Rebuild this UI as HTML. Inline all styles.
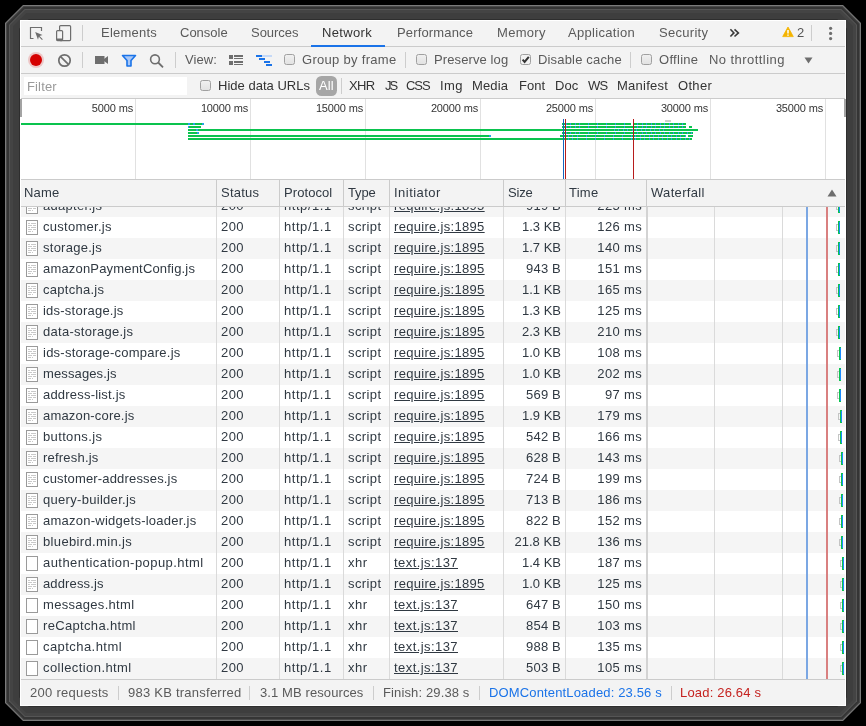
<!DOCTYPE html><html><head><meta charset="utf-8">
<style>
*{box-sizing:border-box}
html,body{margin:0;padding:0;width:866px;height:726px;overflow:hidden;background:#000}
body{font-family:"Liberation Sans",sans-serif;font-size:13px;color:#303942;position:relative}
.fr{position:absolute;left:0;top:0;width:866px;height:726px}
#dt{will-change:transform;position:absolute;left:20px;top:20px;width:826px;height:686px;background:#fff;overflow:hidden}
.bar{position:absolute;left:0;width:826px;background:#f3f3f3;border-bottom:1px solid #cbcbcb}
.t{position:absolute;white-space:nowrap}
.tab{color:#5a5a5a;line-height:26px;top:0}
.sep{position:absolute;width:1px;background:#cdcdcd}
.cb{position:absolute;width:11px;height:11px;border:1px solid #a0a0a0;border-radius:2.5px;background:linear-gradient(#f0f0f0,#e2e2e2)}
.tb2{line-height:26px;color:#5a5a5a}
.tb3{line-height:24px;color:#333}
#ov{position:absolute;left:0;top:79px;width:826px;height:81px;background:#fff;border-bottom:1px solid #cbcbcb}
.gl{position:absolute;top:0;width:1px;height:80px;background:#e1e1e1}
.gt{position:absolute;font-size:11px;letter-spacing:-0.15px;line-height:13px;top:3px;color:#333;white-space:nowrap;text-align:right;width:70px}
.ol{position:absolute;height:2px;background:#0ac34e}
#hdr{position:absolute;left:0;top:160px;width:826px;height:27px;background:#f3f3f3;border-bottom:1px solid #cbcbcb}
.hd{position:absolute;top:0;line-height:26px;color:#303942;white-space:nowrap}
.hv{position:absolute;top:0;width:1px;height:26px;background:#cbcbcb}
#grid{position:absolute;left:0;top:187px;width:826px;height:472px;overflow:hidden;background:#fff}
.r{position:absolute;left:0;width:826px;height:21px;background:#fff}
.r.odd{background:#f5f5f5}
.c{position:absolute;top:0;line-height:19px;white-space:nowrap;color:#303942}
.ic{position:absolute;left:6px;top:3px}
.nm{left:23px;letter-spacing:0.15px}
.st{left:201px;letter-spacing:0.2px}
.pr{left:264px;letter-spacing:0.45px}
.ty{left:328px;letter-spacing:0.25px}
.in{left:374px;letter-spacing:0.3px}
.in u{text-decoration:underline;text-underline-offset:1px}
.sz{right:285px;text-align:right}
.tm{right:204px;text-align:right;letter-spacing:0.1px}
.gv{position:absolute;top:0;width:1px;height:472px;background:#dadada}
.wf{position:absolute;left:816px;top:0;width:10px;height:21px}
.wq{position:absolute;left:0;top:7px;width:3px;height:7px;border:1px solid #c4c4c4;border-right:none}
.wg{position:absolute;left:2px;top:4px;width:2px;height:13px;background:#0ac34e}
.wb{position:absolute;left:3px;top:5px;width:1px;height:11px;background:#1a8cff}
#status{position:absolute;left:0;top:659px;width:826px;height:27px;background:#f3f3f3;border-top:1px solid #cbcbcb}
.sb{position:absolute;top:0;line-height:26px;color:#5a5a5a;white-space:nowrap}
</style></head><body>
<div class="fr" style="background:#7a7a7a;clip-path:polygon(5.00px 23.00px,23.00px 5.00px,843.00px 5.00px,861.00px 23.00px,861.00px 703.00px,843.00px 721.00px,23.00px 721.00px,5.00px 703.00px)"></div>
<div class="fr" style="background:#4a4a4a;clip-path:polygon(6.00px 23.41px,23.41px 6.00px,842.59px 6.00px,860.00px 23.41px,860.00px 702.59px,842.59px 720.00px,23.41px 720.00px,6.00px 702.59px)"></div>
<div class="fr" style="background:#353535;clip-path:polygon(7.00px 23.83px,23.83px 7.00px,842.17px 7.00px,859.00px 23.83px,859.00px 702.17px,842.17px 719.00px,23.83px 719.00px,7.00px 702.17px)"></div>
<div class="fr" style="background:#555555;clip-path:polygon(9.00px 24.66px,24.66px 9.00px,841.34px 9.00px,857.00px 24.66px,857.00px 701.34px,841.34px 717.00px,24.66px 717.00px,9.00px 701.34px)"></div>
<div class="fr" style="background:#444444;clip-path:polygon(10.00px 25.07px,25.07px 10.00px,840.93px 10.00px,856.00px 25.07px,856.00px 700.93px,840.93px 716.00px,25.07px 716.00px,10.00px 700.93px)"></div>
<div class="fr" style="background:#3e3e3e;clip-path:polygon(13.00px 26.31px,26.31px 13.00px,839.69px 13.00px,853.00px 26.31px,853.00px 699.69px,839.69px 713.00px,26.31px 713.00px,13.00px 699.69px)"></div>
<div class="fr" style="background:#2e2e2e;clip-path:polygon(19.00px 28.80px,28.80px 19.00px,837.20px 19.00px,847.00px 28.80px,847.00px 697.20px,837.20px 707.00px,28.80px 707.00px,19.00px 697.20px)"></div>
<div id="dt">
 <!-- tab bar -->
 <div class="bar" style="top:0;height:27px">
  <svg style="position:absolute;left:8px;top:5px" width="16" height="16" viewBox="0 0 16 16">
   <path d="M5.5 13.5H2.5V2.5H13.5V6" fill="none" stroke="#6e6e6e" stroke-width="1.2"></path>
   <path d="M7.2 7L14.5 10 11.5 11 14.8 14.3 14 15 10.8 11.8 10 14.8Z" fill="#6e6e6e"></path>
  </svg>
  <svg style="position:absolute;left:35px;top:4px" width="18" height="18" viewBox="0 0 18 18">
   <rect x="4.6" y="1.6" width="11" height="15" rx="1" fill="none" stroke="#6e6e6e" stroke-width="1.2"></rect>
   <rect x="1.6" y="6.6" width="6" height="10" rx="1" fill="#f3f3f3" stroke="#6e6e6e" stroke-width="1.2"></rect>
   <rect x="1.6" y="14.5" width="6" height="2" fill="#6e6e6e"></rect>
  </svg>
  <div class="sep" style="left:62px;top:5px;height:16px"></div>
  <span class="t tab" style="left: 81px; letter-spacing: 0.22px;">Elements</span>
  <span class="t tab" style="left: 160px; letter-spacing: -0.01px;">Console</span>
  <span class="t tab" style="left: 231px; letter-spacing: -0.03px;">Sources</span>
  <span class="t tab" style="left: 302px; color: rgb(51, 51, 51); letter-spacing: 0.35px;">Network</span>
  <div style="position:absolute;left:291px;top:25px;width:74px;height:2px;background:#1a73e8"></div>
  <span class="t tab" style="left: 377px; letter-spacing: 0.15px;">Performance</span>
  <span class="t tab" style="left: 477px; letter-spacing: 0.31px;">Memory</span>
  <span class="t tab" style="left: 548px; letter-spacing: 0.31px;">Application</span>
  <span class="t tab" style="left: 639px; letter-spacing: 0.29px;">Security</span>
  <svg style="position:absolute;left:709px;top:8px" width="12" height="11" viewBox="0 0 12 11"><path d="M1.4 1.3L4.9 4.9L1.4 8.5M5.5 1.3L9.4 4.9L5.5 8.5" fill="none" stroke="#3a3a3a" stroke-width="1.6"></path></svg>
  <svg style="position:absolute;left:762px;top:6px" width="12" height="12" viewBox="0 0 12 12"><path d="M6 1L11.3 10.6H0.7Z" fill="#f4b400" stroke="#f4b400" stroke-width="0.8" stroke-linejoin="round"></path><path d="M6 4V7.4M6 8.4V9.8" stroke="#fff" stroke-width="1.5"></path></svg>
  <span class="t tab" style="left: 777px; color: rgb(85, 85, 85); letter-spacing: 0.41px;">2</span>
  <div class="sep" style="left:791px;top:5px;height:16px"></div>
  <svg style="position:absolute;left:807px;top:6px" width="7" height="16" viewBox="0 0 7 16"><circle cx="3.6" cy="2.3" r="1.6" fill="#6e6e6e"></circle><circle cx="3.6" cy="7.4" r="1.6" fill="#6e6e6e"></circle><circle cx="3.6" cy="12.6" r="1.6" fill="#6e6e6e"></circle></svg>
 </div>
 <!-- toolbar 2 -->
 <div class="bar" style="top:27px;height:27px">
  <svg style="position:absolute;left:6px;top:3px" width="20" height="20" viewBox="0 0 20 20"><circle cx="10" cy="10" r="8" fill="#d50000" opacity="0.18"></circle><circle cx="10" cy="10" r="6" fill="#d50000"></circle></svg>
  <svg style="position:absolute;left:37px;top:6px" width="15" height="15" viewBox="0 0 15 15"><circle cx="7.5" cy="7.5" r="5.7" fill="none" stroke="#6e6e6e" stroke-width="1.7"></circle><path d="M3.6 3.6L11.4 11.4" stroke="#6e6e6e" stroke-width="1.7"></path></svg>
  <div class="sep" style="left:62px;top:5px;height:16px"></div>
  <svg style="position:absolute;left:74px;top:8px" width="15" height="10" viewBox="0 0 15 10"><rect x="1" y="1" width="9.5" height="8" fill="#6e6e6e"></rect><path d="M10 4L14 1V9L10 6Z" fill="#6e6e6e"></path></svg>
  <svg style="position:absolute;left:101px;top:7px" width="16" height="13" viewBox="0 0 16 13"><path d="M1.5 1.5H14.5L10 6.5V12H6V6.5Z" fill="#a8c7f7" stroke="#1a73e8" stroke-width="1.6" stroke-linejoin="round"></path></svg>
  <svg style="position:absolute;left:129px;top:7px" width="16" height="15" viewBox="0 0 16 15"><circle cx="6" cy="5.3" r="4.4" fill="none" stroke="#6e6e6e" stroke-width="1.6"></circle><path d="M9.2 8.5L14 13.3" stroke="#6e6e6e" stroke-width="1.8"></path></svg>
  <div class="sep" style="left:155px;top:5px;height:16px"></div>
  <span class="t tb2" style="left: 165px; letter-spacing: 0.06px;">View:</span>
  <svg style="position:absolute;left:208px;top:7px" width="16" height="12" viewBox="0 0 16 12"><rect x="1" y="1" width="4" height="4" fill="#6e6e6e"></rect><rect x="1" y="7" width="4" height="4" fill="#6e6e6e"></rect><rect x="6" y="1" width="9" height="2" fill="#6e6e6e"></rect><rect x="6" y="4" width="9" height="1" fill="#6e6e6e"></rect><rect x="6" y="7" width="9" height="2" fill="#6e6e6e"></rect><rect x="6" y="10" width="9" height="1" fill="#6e6e6e"></rect></svg>
  <svg style="position:absolute;left:235px;top:7px" width="18" height="13" viewBox="0 0 18 13"><rect x="1" y="1" width="6" height="2" fill="#1a73e8"></rect><rect x="7" y="1" width="10" height="2" fill="#c5d9f7"></rect><rect x="4" y="4" width="6" height="2" fill="#1a73e8"></rect><rect x="9" y="7" width="6" height="2" fill="#1a73e8"></rect><rect x="11" y="10" width="6" height="2" fill="#1a73e8"></rect></svg>
  <div class="cb" style="left:264px;top:7px"></div>
  <span class="t tb2" style="left: 282px; letter-spacing: 0.3px;">Group by frame</span>
  <div class="sep" style="left:385px;top:5px;height:16px"></div>
  <div class="cb" style="left:396px;top:7px"></div>
  <span class="t tb2" style="left: 414px; letter-spacing: 0.11px;">Preserve log</span>
  <div class="cb" style="left:500px;top:7px;background:#f2f2f2"><svg style="position:absolute;left:0;top:0" width="9" height="9" viewBox="0 0 9 9"><path d="M1.6 4.6L3.6 6.9L7.8 1.8" fill="none" stroke="#333" stroke-width="2"></path></svg></div>
  <span class="t tb2" style="left: 518px; letter-spacing: 0.17px;">Disable cache</span>
  <div class="sep" style="left:610px;top:5px;height:16px"></div>
  <div class="cb" style="left:621px;top:7px"></div>
  <span class="t tb2" style="left: 639px; letter-spacing: 0.29px;">Offline</span>
  <span class="t tb2" style="left: 689px; letter-spacing: 0.44px;">No throttling</span>
  <svg style="position:absolute;left:784px;top:10px" width="9" height="7" viewBox="0 0 9 7"><path d="M0.5 0.5H8.5L4.5 6.5Z" fill="#6e6e6e"></path></svg>
 </div>
 <!-- filter bar -->
 <div class="bar" style="top:54px;height:25px">
  <div style="position:absolute;left:4px;top:3px;width:163px;height:18px;background:#fff"></div>
  <span class="t tb3" style="left: 7px; top: 1px; color: rgb(154, 154, 154); letter-spacing: 0.14px;">Filter</span>
  <div class="cb" style="left:180px;top:6px"></div>
  <span class="t tb3" style="left: 198px; letter-spacing: 0.02px;">Hide data URLs</span>
  <div style="position:absolute;left:296px;top:2px;width:21px;height:20px;border-radius:5.5px;background:#a6a6a6"></div>
  <span class="t tb3" style="left: 299px; color: rgb(255, 255, 255); letter-spacing: 0.15px;">All</span>
  <div class="sep" style="left:321px;top:4px;height:16px"></div>
  <span class="t tb3" style="left: 329px; letter-spacing: -0.62px;">XHR</span>
  <span class="t tb3" style="left: 365px; letter-spacing: -2.01px;">JS</span>
  <span class="t tb3" style="left: 386px; letter-spacing: -1.04px;">CSS</span>
  <span class="t tb3" style="left: 420px; letter-spacing: 0.4px;">Img</span>
  <span class="t tb3" style="left: 452px; letter-spacing: 0.13px;">Media</span>
  <span class="t tb3" style="left: 499px; letter-spacing: 0.03px;">Font</span>
  <span class="t tb3" style="left: 535px; letter-spacing: 0.02px;">Doc</span>
  <span class="t tb3" style="left: 568px; letter-spacing: -0.73px;">WS</span>
  <span class="t tb3" style="left: 597px; letter-spacing: 0.26px;">Manifest</span>
  <span class="t tb3" style="left: 658px; letter-spacing: 0.31px;">Other</span>
 </div>
 <!-- overview -->
 <div id="ov">
  <div class="gl" style="left:115px"></div>
  <div class="gl" style="left:230px"></div>
  <div class="gl" style="left:345px"></div>
  <div class="gl" style="left:460px"></div>
  <div class="gl" style="left:575px"></div>
  <div class="gl" style="left:690px"></div>
  <div class="gl" style="left:805px"></div>
  <span class="gt" style="left:43px">5000 ms</span>
  <span class="gt" style="left:158px">10000 ms</span>
  <span class="gt" style="left:273px">15000 ms</span>
  <span class="gt" style="left:388px">20000 ms</span>
  <span class="gt" style="left:503px">25000 ms</span>
  <span class="gt" style="left:618px">30000 ms</span>
  <span class="gt" style="left:733px">35000 ms</span>
  <div style="position:absolute;left:825px;top:0;width:1px;height:80px;background:#cbcbcb"></div>
  <div class="ol" style="left:0px;top:24px;width:183px"></div>
<div class="ol" style="left:168px;top:27px;width:13px"></div>
<div class="ol" style="left:168px;top:30px;width:510px"></div>
<div class="ol" style="left:168px;top:33px;width:10px"></div>
<div class="ol" style="left:168px;top:36px;width:302px"></div>
<div class="ol" style="left:168px;top:39px;width:504px"></div>
<div class="ol" style="left:542px;top:24px;width:69px;background:repeating-linear-gradient(90deg,#0ac34e 0 3.5px,#2aa6e0 3.5px 4.5px)"></div>
<div class="ol" style="left:614px;top:24px;width:52px;background:repeating-linear-gradient(90deg,#0ac34e 0 3.5px,#2aa6e0 3.5px 4.5px)"></div>
<div class="ol" style="left:542px;top:27px;width:124px;background:repeating-linear-gradient(90deg,#0ac34e 0 3.5px,#2aa6e0 3.5px 4.5px)"></div>
<div class="ol" style="left:669px;top:27px;width:3px"></div>
<div class="ol" style="left:590px;top:30px;width:57px;background:repeating-linear-gradient(90deg,#0ac34e 0 3.5px,#2aa6e0 3.5px 4.5px)"></div>
<div class="ol" style="left:542px;top:33px;width:131px;background:repeating-linear-gradient(90deg,#0ac34e 0 3.5px,#2aa6e0 3.5px 4.5px)"></div>
<div class="ol" style="left:540px;top:36px;width:126px;background:repeating-linear-gradient(90deg,#0ac34e 0 3.5px,#2aa6e0 3.5px 4.5px)"></div>
<div class="ol" style="left:668px;top:36px;width:5px"></div>
<div class="ol" style="left:540px;top:39px;width:130px;background:repeating-linear-gradient(90deg,#0ac34e 0 3.5px,#2aa6e0 3.5px 4.5px)"></div>
<div style="position:absolute;left:543px;top:20px;width:1px;height:60px;background:#1565c0"></div>
<div style="position:absolute;left:545px;top:20px;width:1px;height:60px;background:#b71c1c"></div>
<div style="position:absolute;left:613px;top:20px;width:1px;height:60px;background:#b71c1c"></div>
<div style="position:absolute;left:645px;top:21px;width:6px;height:2px;background:#cfcfcf"></div>
 <div style="position:absolute;left:168px;top:24px;width:2px;height:2px;background:#27a3e6"></div>
<div style="position:absolute;left:173px;top:24px;width:2px;height:2px;background:#27a3e6"></div>
<div style="position:absolute;left:182px;top:24px;width:2px;height:2px;background:#27a3e6"></div>
<div style="position:absolute;left:168px;top:27px;width:1px;height:2px;background:#27a3e6"></div>
<div style="position:absolute;left:176px;top:30px;width:2px;height:2px;background:#27a3e6"></div>
<div style="position:absolute;left:177px;top:33px;width:2px;height:2px;background:#27a3e6"></div>
<div style="position:absolute;left:469px;top:36px;width:2px;height:2px;background:#27a3e6"></div>
</div>
 <!-- header -->
 <div id="hdr">
  <span class="hd" style="left: 4px; letter-spacing: 0.18px;">Name</span>
  <div class="hv" style="left:196px"></div>
  <span class="hd" style="left: 201px; letter-spacing: 0.23px;">Status</span>
  <div class="hv" style="left:259px"></div>
  <span class="hd" style="left: 264px; letter-spacing: 0.08px;">Protocol</span>
  <div class="hv" style="left:323px"></div>
  <span class="hd" style="left: 328px; letter-spacing: -0.16px;">Type</span>
  <div class="hv" style="left:369px"></div>
  <span class="hd" style="left: 374px; letter-spacing: 0.47px;">Initiator</span>
  <div class="hv" style="left:483px"></div>
  <span class="hd" style="left: 488px; letter-spacing: -0.16px;">Size</span>
  <div class="hv" style="left:545px"></div>
  <span class="hd" style="left: 549px; letter-spacing: 0.24px;">Time</span>
  <div class="hv" style="left:626px"></div>
  <span class="hd" style="left: 631px; letter-spacing: 0.32px;">Waterfall</span>
  <svg style="position:absolute;left:807px;top:9px" width="10" height="8" viewBox="0 0 10 8"><path d="M5 0.5L9.5 7.5H0.5Z" fill="#6e6e6e"></path></svg>
 </div>
 <!-- grid -->
 <div id="grid">
<div class="r odd" style="top:-11px"><svg class="ic" width="13" height="16" viewBox="0 0 13 16"><rect x="0.5" y="0.5" width="11" height="14" fill="#fff" stroke="#9a9a9a"></rect><path d="M2 3.5h2M5 3.5h5M2 5.5h4M7 5.5h3M2 7.5h2M5 7.5h5M2 9.5h4M7 9.5h3M2 11.5h3M6 11.5h1" stroke="#c9c9c9" stroke-width="1"></path></svg><span class="c nm" style="letter-spacing: 0.29px;">adapter.js</span><span class="c st" style="letter-spacing: 0.4px;">200</span><span class="c pr" style="letter-spacing: 0.55px;">http/1.1</span><span class="c ty" style="letter-spacing: 0.4px;">script</span><span class="c in" style="letter-spacing: 0.31px;"><u>require.js:1895</u></span><span class="c sz" style="letter-spacing: 0.19px;">919 B</span><span class="c tm" style="letter-spacing: 0.34px;">225 ms</span><div class="wf" style="left:816px"><i class="wq"></i><i class="wg"></i><i class="wb"></i></div></div>
<div class="r" style="top:10px"><svg class="ic" width="13" height="16" viewBox="0 0 13 16"><rect x="0.5" y="0.5" width="11" height="14" fill="#fff" stroke="#9a9a9a"></rect><path d="M2 3.5h2M5 3.5h5M2 5.5h4M7 5.5h3M2 7.5h2M5 7.5h5M2 9.5h4M7 9.5h3M2 11.5h3M6 11.5h1" stroke="#c9c9c9" stroke-width="1"></path></svg><span class="c nm" style="letter-spacing: 0.28px;">customer.js</span><span class="c st" style="letter-spacing: 0.4px;">200</span><span class="c pr" style="letter-spacing: 0.55px;">http/1.1</span><span class="c ty" style="letter-spacing: 0.4px;">script</span><span class="c in" style="letter-spacing: 0.31px;"><u>require.js:1895</u></span><span class="c sz" style="letter-spacing: -0.01px;">1.3 KB</span><span class="c tm" style="letter-spacing: 0.34px;">126 ms</span><div class="wf" style="left:816px"><i class="wq"></i><i class="wg"></i><i class="wb"></i></div></div>
<div class="r odd" style="top:31px"><svg class="ic" width="13" height="16" viewBox="0 0 13 16"><rect x="0.5" y="0.5" width="11" height="14" fill="#fff" stroke="#9a9a9a"></rect><path d="M2 3.5h2M5 3.5h5M2 5.5h4M7 5.5h3M2 7.5h2M5 7.5h5M2 9.5h4M7 9.5h3M2 11.5h3M6 11.5h1" stroke="#c9c9c9" stroke-width="1"></path></svg><span class="c nm" style="letter-spacing: 0.26px;">storage.js</span><span class="c st" style="letter-spacing: 0.4px;">200</span><span class="c pr" style="letter-spacing: 0.55px;">http/1.1</span><span class="c ty" style="letter-spacing: 0.4px;">script</span><span class="c in" style="letter-spacing: 0.31px;"><u>require.js:1895</u></span><span class="c sz" style="letter-spacing: -0.01px;">1.7 KB</span><span class="c tm" style="letter-spacing: 0.34px;">140 ms</span><div class="wf" style="left:816px"><i class="wq"></i><i class="wg"></i><i class="wb"></i></div></div>
<div class="r" style="top:52px"><svg class="ic" width="13" height="16" viewBox="0 0 13 16"><rect x="0.5" y="0.5" width="11" height="14" fill="#fff" stroke="#9a9a9a"></rect><path d="M2 3.5h2M5 3.5h5M2 5.5h4M7 5.5h3M2 7.5h2M5 7.5h5M2 9.5h4M7 9.5h3M2 11.5h3M6 11.5h1" stroke="#c9c9c9" stroke-width="1"></path></svg><span class="c nm" style="letter-spacing: 0.18px;">amazonPaymentConfig.js</span><span class="c st" style="letter-spacing: 0.4px;">200</span><span class="c pr" style="letter-spacing: 0.55px;">http/1.1</span><span class="c ty" style="letter-spacing: 0.4px;">script</span><span class="c in" style="letter-spacing: 0.31px;"><u>require.js:1895</u></span><span class="c sz" style="letter-spacing: 0.19px;">943 B</span><span class="c tm" style="letter-spacing: 0.34px;">151 ms</span><div class="wf" style="left:816px"><i class="wq"></i><i class="wg"></i><i class="wb"></i></div></div>
<div class="r odd" style="top:73px"><svg class="ic" width="13" height="16" viewBox="0 0 13 16"><rect x="0.5" y="0.5" width="11" height="14" fill="#fff" stroke="#9a9a9a"></rect><path d="M2 3.5h2M5 3.5h5M2 5.5h4M7 5.5h3M2 7.5h2M5 7.5h5M2 9.5h4M7 9.5h3M2 11.5h3M6 11.5h1" stroke="#c9c9c9" stroke-width="1"></path></svg><span class="c nm" style="letter-spacing: 0.27px;">captcha.js</span><span class="c st" style="letter-spacing: 0.4px;">200</span><span class="c pr" style="letter-spacing: 0.55px;">http/1.1</span><span class="c ty" style="letter-spacing: 0.4px;">script</span><span class="c in" style="letter-spacing: 0.31px;"><u>require.js:1895</u></span><span class="c sz" style="letter-spacing: -0.01px;">1.1 KB</span><span class="c tm" style="letter-spacing: 0.34px;">165 ms</span><div class="wf" style="left:816px"><i class="wq"></i><i class="wg"></i><i class="wb"></i></div></div>
<div class="r" style="top:94px"><svg class="ic" width="13" height="16" viewBox="0 0 13 16"><rect x="0.5" y="0.5" width="11" height="14" fill="#fff" stroke="#9a9a9a"></rect><path d="M2 3.5h2M5 3.5h5M2 5.5h4M7 5.5h3M2 7.5h2M5 7.5h5M2 9.5h4M7 9.5h3M2 11.5h3M6 11.5h1" stroke="#c9c9c9" stroke-width="1"></path></svg><span class="c nm" style="letter-spacing: 0.23px;">ids-storage.js</span><span class="c st" style="letter-spacing: 0.4px;">200</span><span class="c pr" style="letter-spacing: 0.55px;">http/1.1</span><span class="c ty" style="letter-spacing: 0.4px;">script</span><span class="c in" style="letter-spacing: 0.31px;"><u>require.js:1895</u></span><span class="c sz" style="letter-spacing: -0.01px;">1.3 KB</span><span class="c tm" style="letter-spacing: 0.34px;">125 ms</span><div class="wf" style="left:816px"><i class="wq"></i><i class="wg"></i><i class="wb"></i></div></div>
<div class="r odd" style="top:115px"><svg class="ic" width="13" height="16" viewBox="0 0 13 16"><rect x="0.5" y="0.5" width="11" height="14" fill="#fff" stroke="#9a9a9a"></rect><path d="M2 3.5h2M5 3.5h5M2 5.5h4M7 5.5h3M2 7.5h2M5 7.5h5M2 9.5h4M7 9.5h3M2 11.5h3M6 11.5h1" stroke="#c9c9c9" stroke-width="1"></path></svg><span class="c nm" style="letter-spacing: 0.29px;">data-storage.js</span><span class="c st" style="letter-spacing: 0.4px;">200</span><span class="c pr" style="letter-spacing: 0.55px;">http/1.1</span><span class="c ty" style="letter-spacing: 0.4px;">script</span><span class="c in" style="letter-spacing: 0.31px;"><u>require.js:1895</u></span><span class="c sz" style="letter-spacing: -0.01px;">2.3 KB</span><span class="c tm" style="letter-spacing: 0.34px;">210 ms</span><div class="wf" style="left:816px"><i class="wq"></i><i class="wg"></i><i class="wb"></i></div></div>
<div class="r" style="top:136px"><svg class="ic" width="13" height="16" viewBox="0 0 13 16"><rect x="0.5" y="0.5" width="11" height="14" fill="#fff" stroke="#9a9a9a"></rect><path d="M2 3.5h2M5 3.5h5M2 5.5h4M7 5.5h3M2 7.5h2M5 7.5h5M2 9.5h4M7 9.5h3M2 11.5h3M6 11.5h1" stroke="#c9c9c9" stroke-width="1"></path></svg><span class="c nm" style="letter-spacing: 0.24px;">ids-storage-compare.js</span><span class="c st" style="letter-spacing: 0.4px;">200</span><span class="c pr" style="letter-spacing: 0.55px;">http/1.1</span><span class="c ty" style="letter-spacing: 0.4px;">script</span><span class="c in" style="letter-spacing: 0.31px;"><u>require.js:1895</u></span><span class="c sz" style="letter-spacing: -0.01px;">1.0 KB</span><span class="c tm" style="letter-spacing: 0.34px;">108 ms</span><div class="wf" style="left:817px"><i class="wq"></i><i class="wg"></i><i class="wb"></i></div></div>
<div class="r odd" style="top:157px"><svg class="ic" width="13" height="16" viewBox="0 0 13 16"><rect x="0.5" y="0.5" width="11" height="14" fill="#fff" stroke="#9a9a9a"></rect><path d="M2 3.5h2M5 3.5h5M2 5.5h4M7 5.5h3M2 7.5h2M5 7.5h5M2 9.5h4M7 9.5h3M2 11.5h3M6 11.5h1" stroke="#c9c9c9" stroke-width="1"></path></svg><span class="c nm" style="letter-spacing: 0.12px;">messages.js</span><span class="c st" style="letter-spacing: 0.4px;">200</span><span class="c pr" style="letter-spacing: 0.55px;">http/1.1</span><span class="c ty" style="letter-spacing: 0.4px;">script</span><span class="c in" style="letter-spacing: 0.31px;"><u>require.js:1895</u></span><span class="c sz" style="letter-spacing: -0.01px;">1.0 KB</span><span class="c tm" style="letter-spacing: 0.34px;">202 ms</span><div class="wf" style="left:817px"><i class="wq"></i><i class="wg"></i><i class="wb"></i></div></div>
<div class="r" style="top:178px"><svg class="ic" width="13" height="16" viewBox="0 0 13 16"><rect x="0.5" y="0.5" width="11" height="14" fill="#fff" stroke="#9a9a9a"></rect><path d="M2 3.5h2M5 3.5h5M2 5.5h4M7 5.5h3M2 7.5h2M5 7.5h5M2 9.5h4M7 9.5h3M2 11.5h3M6 11.5h1" stroke="#c9c9c9" stroke-width="1"></path></svg><span class="c nm" style="letter-spacing: 0.2px;">address-list.js</span><span class="c st" style="letter-spacing: 0.4px;">200</span><span class="c pr" style="letter-spacing: 0.55px;">http/1.1</span><span class="c ty" style="letter-spacing: 0.4px;">script</span><span class="c in" style="letter-spacing: 0.31px;"><u>require.js:1895</u></span><span class="c sz" style="letter-spacing: 0.19px;">569 B</span><span class="c tm" style="letter-spacing: 0.33px;">97 ms</span><div class="wf" style="left:817px"><i class="wq"></i><i class="wg"></i><i class="wb"></i></div></div>
<div class="r odd" style="top:199px"><svg class="ic" width="13" height="16" viewBox="0 0 13 16"><rect x="0.5" y="0.5" width="11" height="14" fill="#fff" stroke="#9a9a9a"></rect><path d="M2 3.5h2M5 3.5h5M2 5.5h4M7 5.5h3M2 7.5h2M5 7.5h5M2 9.5h4M7 9.5h3M2 11.5h3M6 11.5h1" stroke="#c9c9c9" stroke-width="1"></path></svg><span class="c nm" style="letter-spacing: 0.18px;">amazon-core.js</span><span class="c st" style="letter-spacing: 0.4px;">200</span><span class="c pr" style="letter-spacing: 0.55px;">http/1.1</span><span class="c ty" style="letter-spacing: 0.4px;">script</span><span class="c in" style="letter-spacing: 0.31px;"><u>require.js:1895</u></span><span class="c sz" style="letter-spacing: -0.01px;">1.9 KB</span><span class="c tm" style="letter-spacing: 0.34px;">179 ms</span><div class="wf" style="left:818px"><i class="wq"></i><i class="wg"></i><i class="wb"></i></div></div>
<div class="r" style="top:220px"><svg class="ic" width="13" height="16" viewBox="0 0 13 16"><rect x="0.5" y="0.5" width="11" height="14" fill="#fff" stroke="#9a9a9a"></rect><path d="M2 3.5h2M5 3.5h5M2 5.5h4M7 5.5h3M2 7.5h2M5 7.5h5M2 9.5h4M7 9.5h3M2 11.5h3M6 11.5h1" stroke="#c9c9c9" stroke-width="1"></path></svg><span class="c nm" style="letter-spacing: 0.36px;">buttons.js</span><span class="c st" style="letter-spacing: 0.4px;">200</span><span class="c pr" style="letter-spacing: 0.55px;">http/1.1</span><span class="c ty" style="letter-spacing: 0.4px;">script</span><span class="c in" style="letter-spacing: 0.31px;"><u>require.js:1895</u></span><span class="c sz" style="letter-spacing: 0.19px;">542 B</span><span class="c tm" style="letter-spacing: 0.34px;">166 ms</span><div class="wf" style="left:818px"><i class="wq"></i><i class="wg"></i><i class="wb"></i></div></div>
<div class="r odd" style="top:241px"><svg class="ic" width="13" height="16" viewBox="0 0 13 16"><rect x="0.5" y="0.5" width="11" height="14" fill="#fff" stroke="#9a9a9a"></rect><path d="M2 3.5h2M5 3.5h5M2 5.5h4M7 5.5h3M2 7.5h2M5 7.5h5M2 9.5h4M7 9.5h3M2 11.5h3M6 11.5h1" stroke="#c9c9c9" stroke-width="1"></path></svg><span class="c nm" style="letter-spacing: 0.21px;">refresh.js</span><span class="c st" style="letter-spacing: 0.4px;">200</span><span class="c pr" style="letter-spacing: 0.55px;">http/1.1</span><span class="c ty" style="letter-spacing: 0.4px;">script</span><span class="c in" style="letter-spacing: 0.31px;"><u>require.js:1895</u></span><span class="c sz" style="letter-spacing: 0.19px;">628 B</span><span class="c tm" style="letter-spacing: 0.34px;">143 ms</span><div class="wf" style="left:819px"><i class="wq"></i><i class="wg"></i><i class="wb"></i></div></div>
<div class="r" style="top:262px"><svg class="ic" width="13" height="16" viewBox="0 0 13 16"><rect x="0.5" y="0.5" width="11" height="14" fill="#fff" stroke="#9a9a9a"></rect><path d="M2 3.5h2M5 3.5h5M2 5.5h4M7 5.5h3M2 7.5h2M5 7.5h5M2 9.5h4M7 9.5h3M2 11.5h3M6 11.5h1" stroke="#c9c9c9" stroke-width="1"></path></svg><span class="c nm" style="letter-spacing: 0.17px;">customer-addresses.js</span><span class="c st" style="letter-spacing: 0.4px;">200</span><span class="c pr" style="letter-spacing: 0.55px;">http/1.1</span><span class="c ty" style="letter-spacing: 0.4px;">script</span><span class="c in" style="letter-spacing: 0.31px;"><u>require.js:1895</u></span><span class="c sz" style="letter-spacing: 0.19px;">724 B</span><span class="c tm" style="letter-spacing: 0.34px;">199 ms</span><div class="wf" style="left:819px"><i class="wq"></i><i class="wg"></i><i class="wb"></i></div></div>
<div class="r odd" style="top:283px"><svg class="ic" width="13" height="16" viewBox="0 0 13 16"><rect x="0.5" y="0.5" width="11" height="14" fill="#fff" stroke="#9a9a9a"></rect><path d="M2 3.5h2M5 3.5h5M2 5.5h4M7 5.5h3M2 7.5h2M5 7.5h5M2 9.5h4M7 9.5h3M2 11.5h3M6 11.5h1" stroke="#c9c9c9" stroke-width="1"></path></svg><span class="c nm" style="letter-spacing: 0.3px;">query-builder.js</span><span class="c st" style="letter-spacing: 0.4px;">200</span><span class="c pr" style="letter-spacing: 0.55px;">http/1.1</span><span class="c ty" style="letter-spacing: 0.4px;">script</span><span class="c in" style="letter-spacing: 0.31px;"><u>require.js:1895</u></span><span class="c sz" style="letter-spacing: 0.19px;">713 B</span><span class="c tm" style="letter-spacing: 0.34px;">186 ms</span><div class="wf" style="left:819px"><i class="wq"></i><i class="wg"></i><i class="wb"></i></div></div>
<div class="r" style="top:304px"><svg class="ic" width="13" height="16" viewBox="0 0 13 16"><rect x="0.5" y="0.5" width="11" height="14" fill="#fff" stroke="#9a9a9a"></rect><path d="M2 3.5h2M5 3.5h5M2 5.5h4M7 5.5h3M2 7.5h2M5 7.5h5M2 9.5h4M7 9.5h3M2 11.5h3M6 11.5h1" stroke="#c9c9c9" stroke-width="1"></path></svg><span class="c nm" style="letter-spacing: 0.25px;">amazon-widgets-loader.js</span><span class="c st" style="letter-spacing: 0.4px;">200</span><span class="c pr" style="letter-spacing: 0.55px;">http/1.1</span><span class="c ty" style="letter-spacing: 0.4px;">script</span><span class="c in" style="letter-spacing: 0.31px;"><u>require.js:1895</u></span><span class="c sz" style="letter-spacing: 0.19px;">822 B</span><span class="c tm" style="letter-spacing: 0.34px;">152 ms</span><div class="wf" style="left:819px"><i class="wq"></i><i class="wg"></i><i class="wb"></i></div></div>
<div class="r odd" style="top:325px"><svg class="ic" width="13" height="16" viewBox="0 0 13 16"><rect x="0.5" y="0.5" width="11" height="14" fill="#fff" stroke="#9a9a9a"></rect><path d="M2 3.5h2M5 3.5h5M2 5.5h4M7 5.5h3M2 7.5h2M5 7.5h5M2 9.5h4M7 9.5h3M2 11.5h3M6 11.5h1" stroke="#c9c9c9" stroke-width="1"></path></svg><span class="c nm" style="letter-spacing: 0.35px;">bluebird.min.js</span><span class="c st" style="letter-spacing: 0.4px;">200</span><span class="c pr" style="letter-spacing: 0.55px;">http/1.1</span><span class="c ty" style="letter-spacing: 0.4px;">script</span><span class="c in" style="letter-spacing: 0.31px;"><u>require.js:1895</u></span><span class="c sz" style="letter-spacing: 0.05px;">21.8 KB</span><span class="c tm" style="letter-spacing: 0.34px;">136 ms</span><div class="wf" style="left:819px"><i class="wq"></i><i class="wg"></i><i class="wb"></i></div></div>
<div class="r" style="top:346px"><svg class="ic" width="13" height="16" viewBox="0 0 13 16"><rect x="0.5" y="0.5" width="11" height="14" fill="#fff" stroke="#9a9a9a"></rect></svg><span class="c nm" style="letter-spacing: 0.44px;">authentication-popup.html</span><span class="c st" style="letter-spacing: 0.4px;">200</span><span class="c pr" style="letter-spacing: 0.55px;">http/1.1</span><span class="c ty" style="letter-spacing: 0.53px;">xhr</span><span class="c in" style="letter-spacing: 0.43px;"><u>text.js:137</u></span><span class="c sz" style="letter-spacing: -0.01px;">1.4 KB</span><span class="c tm" style="letter-spacing: 0.34px;">187 ms</span><div class="wf" style="left:820px"><i class="wq"></i><i class="wg"></i><i class="wb"></i></div></div>
<div class="r odd" style="top:367px"><svg class="ic" width="13" height="16" viewBox="0 0 13 16"><rect x="0.5" y="0.5" width="11" height="14" fill="#fff" stroke="#9a9a9a"></rect><path d="M2 3.5h2M5 3.5h5M2 5.5h4M7 5.5h3M2 7.5h2M5 7.5h5M2 9.5h4M7 9.5h3M2 11.5h3M6 11.5h1" stroke="#c9c9c9" stroke-width="1"></path></svg><span class="c nm" style="letter-spacing: 0.13px;">address.js</span><span class="c st" style="letter-spacing: 0.4px;">200</span><span class="c pr" style="letter-spacing: 0.55px;">http/1.1</span><span class="c ty" style="letter-spacing: 0.4px;">script</span><span class="c in" style="letter-spacing: 0.31px;"><u>require.js:1895</u></span><span class="c sz" style="letter-spacing: -0.01px;">1.0 KB</span><span class="c tm" style="letter-spacing: 0.34px;">125 ms</span><div class="wf" style="left:820px"><i class="wq"></i><i class="wg"></i><i class="wb"></i></div></div>
<div class="r" style="top:388px"><svg class="ic" width="13" height="16" viewBox="0 0 13 16"><rect x="0.5" y="0.5" width="11" height="14" fill="#fff" stroke="#9a9a9a"></rect></svg><span class="c nm" style="letter-spacing: 0.3px;">messages.html</span><span class="c st" style="letter-spacing: 0.4px;">200</span><span class="c pr" style="letter-spacing: 0.55px;">http/1.1</span><span class="c ty" style="letter-spacing: 0.53px;">xhr</span><span class="c in" style="letter-spacing: 0.43px;"><u>text.js:137</u></span><span class="c sz" style="letter-spacing: 0.19px;">647 B</span><span class="c tm" style="letter-spacing: 0.34px;">150 ms</span><div class="wf" style="left:820px"><i class="wq"></i><i class="wg"></i><i class="wb"></i></div></div>
<div class="r odd" style="top:409px"><svg class="ic" width="13" height="16" viewBox="0 0 13 16"><rect x="0.5" y="0.5" width="11" height="14" fill="#fff" stroke="#9a9a9a"></rect></svg><span class="c nm" style="letter-spacing: 0.33px;">reCaptcha.html</span><span class="c st" style="letter-spacing: 0.4px;">200</span><span class="c pr" style="letter-spacing: 0.55px;">http/1.1</span><span class="c ty" style="letter-spacing: 0.53px;">xhr</span><span class="c in" style="letter-spacing: 0.43px;"><u>text.js:137</u></span><span class="c sz" style="letter-spacing: 0.19px;">854 B</span><span class="c tm" style="letter-spacing: 0.34px;">103 ms</span><div class="wf" style="left:820px"><i class="wq"></i><i class="wg"></i><i class="wb"></i></div></div>
<div class="r" style="top:430px"><svg class="ic" width="13" height="16" viewBox="0 0 13 16"><rect x="0.5" y="0.5" width="11" height="14" fill="#fff" stroke="#9a9a9a"></rect></svg><span class="c nm" style="letter-spacing: 0.44px;">captcha.html</span><span class="c st" style="letter-spacing: 0.4px;">200</span><span class="c pr" style="letter-spacing: 0.55px;">http/1.1</span><span class="c ty" style="letter-spacing: 0.53px;">xhr</span><span class="c in" style="letter-spacing: 0.43px;"><u>text.js:137</u></span><span class="c sz" style="letter-spacing: 0.19px;">988 B</span><span class="c tm" style="letter-spacing: 0.34px;">135 ms</span><div class="wf" style="left:820px"><i class="wq"></i><i class="wg"></i><i class="wb"></i></div></div>
<div class="r odd" style="top:451px"><svg class="ic" width="13" height="16" viewBox="0 0 13 16"><rect x="0.5" y="0.5" width="11" height="14" fill="#fff" stroke="#9a9a9a"></rect></svg><span class="c nm" style="letter-spacing: 0.42px;">collection.html</span><span class="c st" style="letter-spacing: 0.4px;">200</span><span class="c pr" style="letter-spacing: 0.55px;">http/1.1</span><span class="c ty" style="letter-spacing: 0.53px;">xhr</span><span class="c in" style="letter-spacing: 0.43px;"><u>text.js:137</u></span><span class="c sz" style="letter-spacing: 0.19px;">503 B</span><span class="c tm" style="letter-spacing: 0.34px;">105 ms</span><div class="wf" style="left:820px"><i class="wq"></i><i class="wg"></i><i class="wb"></i></div></div>
  <div class="gv" style="left:196px"></div>
  <div class="gv" style="left:259px"></div>
  <div class="gv" style="left:323px"></div>
  <div class="gv" style="left:369px"></div>
  <div class="gv" style="left:483px"></div>
  <div class="gv" style="left:545px"></div>
  <div class="gv" style="left:626px;width:2px;background:#d3d3d3"></div>
  <div class="gv" style="left:694px"></div>
  <div class="gv" style="left:762px"></div>
  <div class="gv" style="left:786px;width:2px;background:#7ba7e3"></div>
  <div class="gv" style="left:806px;width:2px;background:#d98080"></div>
 </div>
 <!-- status -->
 <div id="status">
  <span class="sb" style="left: 10px; letter-spacing: 0.29px;">200 requests</span>
  <div class="sep" style="left:98px;top:6px;height:14px"></div>
  <span class="sb" style="left: 108px; letter-spacing: 0.24px;">983 KB transferred</span>
  <div class="sep" style="left:229px;top:6px;height:14px"></div>
  <span class="sb" style="left: 240px; letter-spacing: 0.1px;">3.1 MB resources</span>
  <div class="sep" style="left:353px;top:6px;height:14px"></div>
  <span class="sb" style="left: 363px; letter-spacing: 0.13px;">Finish: 29.38 s</span>
  <div class="sep" style="left:459px;top:6px;height:14px"></div>
  <span class="sb" style="left: 469px; color: rgb(26, 115, 232); letter-spacing: 0.15px;">DOMContentLoaded: 23.56 s</span>
  <div class="sep" style="left:651px;top:6px;height:14px"></div>
  <span class="sb" style="left: 660px; color: rgb(197, 34, 31); letter-spacing: 0.18px;">Load: 26.64 s</span>
 </div>
 <div style="position:absolute;left:0;top:0;width:826px;height:1px;background:#fff"></div>
 <div style="position:absolute;left:0;top:685px;width:826px;height:1px;background:#fff"></div>
 <div style="position:absolute;left:0;top:0;width:1px;height:686px;background:#fff"></div>
 <div style="position:absolute;left:825px;top:0;width:1px;height:686px;background:#fff"></div>
 <div style="position:absolute;left:0;top:79px;width:2px;height:18px;background:#a3a3a3"></div>
 <div style="position:absolute;left:824px;top:79px;width:2px;height:18px;background:#a3a3a3"></div>
</div>

</body></html>
